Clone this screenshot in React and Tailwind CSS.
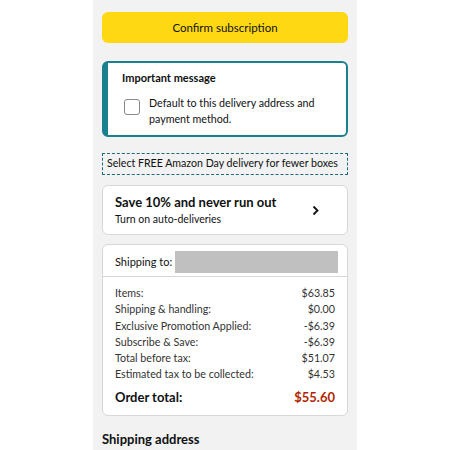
const rows = [
  ["Items:", "$63.85"],
  ["Shipping & handling:", "$0.00"],
  ["Exclusive Promotion Applied:", "-$6.39"],
  ["Subscribe & Save:", "-$6.39"],
  ["Total before tax:", "$51.07"],
  ["Estimated tax to be collected:", "$4.53"],
];

export default function App() {
  return (
    <div className="flex h-[450px] w-[450px] justify-center overflow-hidden bg-white font-['Lato',sans-serif] text-[#0f1111]">
      <div className="flex w-[264px] shrink-0 flex-col bg-[#f2f2f2] px-[9px] pt-[12px]">
        <button className="h-[31px] w-full shrink-0 rounded-[6px] bg-[#ffd814] pt-[1px] text-[11.5px]">Confirm subscription</button>

        <div className="mt-[18px] flex h-[76px] shrink-0 rounded-[6px] border-2 border-l-[6px] border-[#1a7f8e] bg-white pl-[14px] pt-[7px]">
          <div className="flex flex-col">
            <h2 className="text-[11px] font-bold">Important message</h2>
            <div className="mt-[8px] flex items-start gap-[9px] pl-[2px]">
              <div className="mt-[4px] h-[16px] w-[16px] shrink-0 rounded-[3px] border border-[#888c8c]" />
              <p className="text-[10.7px] leading-[16px]">Default to this delivery address and<br />payment method.</p>
            </div>
          </div>
        </div>

        <div className="mt-[16px] flex h-[22px] shrink-0 items-center border border-dashed border-[#1d6b7c] px-[4px] text-[10.6px] whitespace-nowrap">
          Select FREE Amazon Day delivery for fewer boxes
        </div>

        <div className="mt-[10px] flex h-[50px] shrink-0 items-center justify-between rounded-[6px] border border-[#d5d9d9] bg-white pl-[12px] pr-[28px]">
          <div className="flex flex-col">
            <span className="text-[13px] leading-[17px] font-bold">Save 10% and never run out</span>
            <span className="text-[10.5px] leading-[16px]">Turn on auto-deliveries</span>
          </div>
          <svg width="7" height="11" viewBox="0 0 7 11" fill="none" stroke="#0f1111" strokeWidth="1.8">
            <path d="M1.5 1.5l4 4-4 4" />
          </svg>
        </div>

        <div className="mt-[9px] flex shrink-0 flex-col rounded-[6px] border border-[#d5d9d9] bg-white">
          <div className="flex items-center gap-[3px] border-b border-[#d5d9d9] pb-[3px] pl-[12px] pr-[9px] pt-[6px]">
            <span className="text-[11px]">Shipping to:</span>
            <div className="h-[22px] flex-1 bg-[#c0c0c0]" />
          </div>
          <div className="flex flex-col px-[12px] pb-[9px] pt-[8px] text-[10.7px] leading-[16.3px] text-[#333]">
            {rows.map(([label, value]) => (
              <div key={label} className="flex justify-between">
                <span>{label}</span>
                <span>{value}</span>
              </div>
            ))}
            <div className="mt-[6px] flex justify-between text-[13px] leading-[17px] font-bold text-[#0f1111]">
              <span>Order total:</span>
              <span className="text-[#b12704]">$55.60</span>
            </div>
          </div>
        </div>

        <h2 className="mt-[15px] shrink-0 text-[13px] leading-[17px] font-bold">Shipping address</h2>
      </div>
    </div>
  );
}
